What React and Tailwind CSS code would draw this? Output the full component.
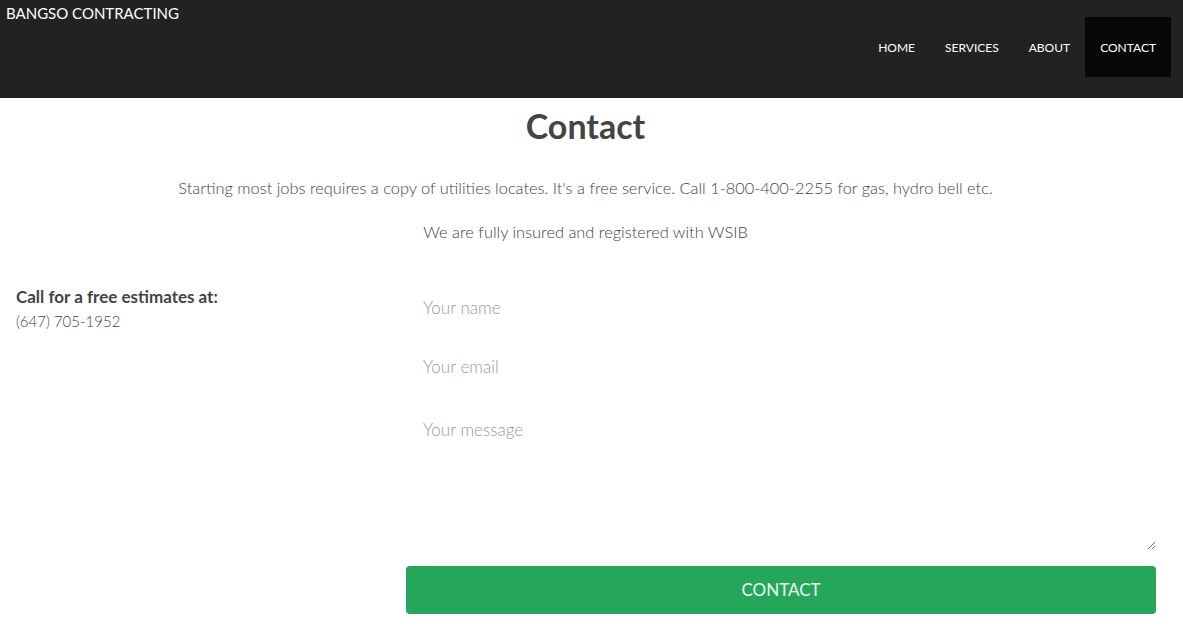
import React from 'react';

const navItems = ['HOME', 'SERVICES', 'ABOUT', 'CONTACT'];

export default function App() {
  return (
    <div className="min-h-[633px] bg-white font-['Lato','Liberation_Sans',sans-serif] text-[#444]">
      {/* header */}
      <header className="h-[98px] bg-[#222222] flex justify-between">
        <div className="pl-[6px] pt-[4px] text-[15px] leading-[18px] text-white">BANGSO CONTRACTING</div>
        <nav className="flex items-start pt-[17px] pr-[12px]">
          {navItems.map((item) => (
            <a
              key={item}
              href="#"
              className={
                'h-[60px] px-[15px] pt-[1px] flex items-center text-[12px] text-white ' +
                (item === 'CONTACT' ? 'bg-[#080808]' : '')
              }
            >
              {item}
            </a>
          ))}
        </nav>
      </header>

      {/* intro */}
      <section className="text-center pr-[12px]">
        <h1 className="pt-[7px] text-[34px] leading-[42px] font-bold text-[#444]">Contact</h1>
        <p className="mt-[31px] text-[16.4px] leading-[20px] font-light">
          Starting most jobs requires a copy of utilities locates. It's a free service. Call 1-800-400-2255 for gas, hydro bell etc.
        </p>
        <p className="mt-[24px] text-[16.4px] leading-[20px] font-light">We are fully insured and registered with WSIB</p>
      </section>

      {/* contact area */}
      <section className="mt-[41px] flex pb-[19px]">
        <div className="w-[406px] pl-[16px] pt-[3px]">
          <div className="text-[17px] leading-[22px] font-bold text-[#444]">Call for a free estimates at:</div>
          <div className="mt-[3px] text-[15px] leading-[20px] font-light">(647) 705-1952</div>
        </div>
        <form className="w-[750px] flex flex-col" onSubmit={(e) => e.preventDefault()}>
          <input
            type="text"
            placeholder="Your name"
            className="h-[49px] px-[17px] text-[17px] font-light outline-none placeholder:text-[#999]"
          />
          <input
            type="email"
            placeholder="Your email"
            className="mt-[10px] h-[49px] px-[17px] text-[17px] font-light outline-none placeholder:text-[#999]"
          />
          <textarea
            placeholder="Your message"
            className="mt-[10px] h-[149px] px-[17px] py-[17px] text-[17px] leading-[24px] font-light outline-none placeholder:text-[#999]"
          />
          <button
            type="submit"
            className="mt-[16px] h-[48px] rounded-[4px] bg-[#26a65b] text-[17px] text-white/90"
          >
            CONTACT
          </button>
        </form>
      </section>
    </div>
  );
}
